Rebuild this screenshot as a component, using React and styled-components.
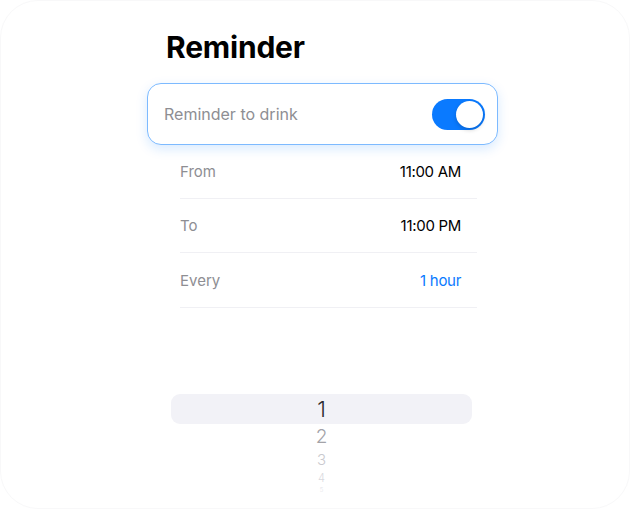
import React, { useState } from 'react';
import styled, { createGlobalStyle } from 'styled-components';

const GlobalStyle = createGlobalStyle`
  html, body {
    margin: 0;
    padding: 0;
    background: #ffffff;
  }
  body {
    font-family: Inter, 'Noto Sans', sans-serif;
    -webkit-font-smoothing: antialiased;
  }
`;

const Frame = styled.div`
  box-sizing: border-box;
  width: 630px;
  height: 509px;
  border: 1px solid #f8f8f9;
  border-radius: 38px;
  overflow: hidden;
  padding: 0 131px 0 146px;
  display: flex;
  flex-direction: column;
`;

const Title = styled.h1`
  margin: 28px 0 0 19px;
  font-size: 30px;
  line-height: 36px;
  font-weight: 700;
  color: #000;
  letter-spacing: -0.2px;
`;

const ToggleCard = styled.div`
  margin-top: 18px;
  height: 62px;
  box-sizing: border-box;
  border: 1px solid #7dbaff;
  border-radius: 14px;
  box-shadow: 0 4px 12px rgba(10, 122, 255, 0.16);
  display: flex;
  align-items: center;
  justify-content: space-between;
  padding: 0 12px 0 16px;
  background: #fff;
`;

const CardLabel = styled.span`
  font-size: 16px;
  color: #8e8e93;
`;

const Switch = styled.button`
  width: 53px;
  height: 31px;
  border: none;
  padding: 2px;
  border-radius: 16px;
  background: ${p => (p.on ? '#0a7aff' : '#e5e5ea')};
  display: flex;
  justify-content: ${p => (p.on ? 'flex-end' : 'flex-start')};
  cursor: pointer;
`;

const Knob = styled.span`
  width: 27px;
  height: 27px;
  border-radius: 50%;
  background: #fff;
  box-shadow: 0 2px 4px rgba(0, 0, 0, 0.18);
`;

const Settings = styled.div`
  margin: -1px 21px 0 33px;
  display: flex;
  flex-direction: column;
`;

const Row = styled.div`
  height: 54.5px;
  box-sizing: border-box;
  border-bottom: 1px solid #f0f0f4;
  display: flex;
  align-items: center;
  justify-content: space-between;
  padding: 1px 16px 0 0;
  font-size: 15px;
`;

const RowLabel = styled.span`
  color: #8e8e93;
`;

const RowValue = styled.span`
  color: ${p => (p.accent ? '#0a7aff' : '#000')};
  font-weight: 400;
  letter-spacing: -0.3px;
`;

const Picker = styled.div`
  margin: 86px 26px 0 24px;
  display: flex;
  flex-direction: column;
  align-items: center;
`;

const PickerItem = styled.div`
  width: 100%;
  height: ${p => p.h}px;
  display: flex;
  align-items: center;
  justify-content: center;
  font-size: ${p => p.size}px;
  font-weight: 300;
  color: ${p => p.color};
  background: ${p => (p.selected ? '#f2f2f7' : 'transparent')};
  border-radius: ${p => (p.selected ? '9px' : '0')};
  line-height: 1;
`;

const wheel = [
  { v: 1, h: 30, size: 22, color: '#2c2c2e', selected: true },
  { v: 2, h: 26, size: 19, color: '#a3a3a8' },
  { v: 3, h: 20, size: 15, color: '#c9c9ce' },
  { v: 4, h: 17, size: 11, color: '#d9d9de' },
  { v: 5, h: 6, size: 6, color: '#e3e3e8' },
];

export default function App() {
  const [on, setOn] = useState(true);

  return (
    <>
      <GlobalStyle />
      <Frame>
        <Title>Reminder</Title>
        <ToggleCard>
          <CardLabel>Reminder to drink</CardLabel>
          <Switch on={on} onClick={() => setOn(!on)}>
            <Knob />
          </Switch>
        </ToggleCard>
        <Settings>
          <Row>
            <RowLabel>From</RowLabel>
            <RowValue>11:00 AM</RowValue>
          </Row>
          <Row>
            <RowLabel>To</RowLabel>
            <RowValue>11:00 PM</RowValue>
          </Row>
          <Row>
            <RowLabel>Every</RowLabel>
            <RowValue accent>1 hour</RowValue>
          </Row>
        </Settings>
        <Picker>
          {wheel.map(item => (
            <PickerItem key={item.v} {...item}>
              {item.v}
            </PickerItem>
          ))}
        </Picker>
      </Frame>
    </>
  );
}
